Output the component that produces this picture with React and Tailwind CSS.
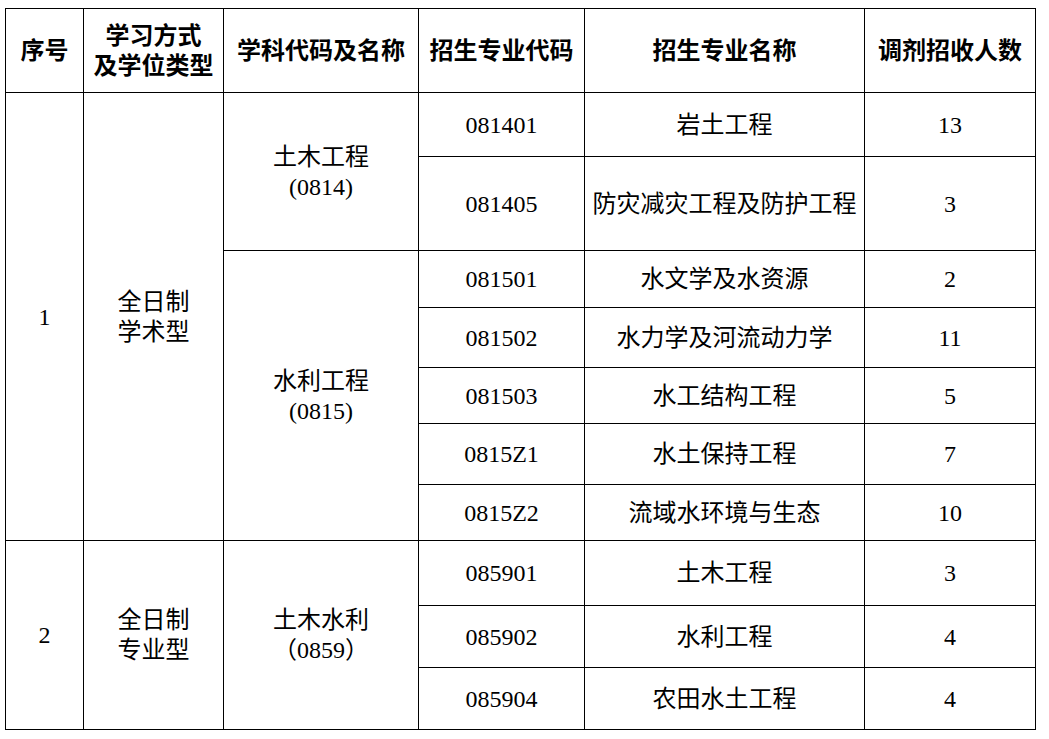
import React from 'react';

const font = { fontFamily: '"Liberation Serif", "Noto Sans CJK SC", serif' };

const rows = [
  { code: '081401', name: '岩土工程', num: '13', h: 'h-[64px]' },
  { code: '081405', name: '防灾减灾工程及防护工程', num: '3', h: 'h-[94px]' },
  { code: '081501', name: '水文学及水资源', num: '2', h: 'h-[57px]' },
  { code: '081502', name: '水力学及河流动力学', num: '11', h: 'h-[60px]' },
  { code: '081503', name: '水工结构工程', num: '5', h: 'h-[56px]' },
  { code: '0815Z1', name: '水土保持工程', num: '7', h: 'h-[61px]' },
  { code: '0815Z2', name: '流域水环境与生态', num: '10', h: 'h-[56px]' },
  { code: '085901', name: '土木工程', num: '3', h: 'h-[65px]' },
  { code: '085902', name: '水利工程', num: '4', h: 'h-[62px]' },
  { code: '085904', name: '农田水土工程', num: '4', h: 'h-[62px]' },
];

const cell = 'border border-black text-center align-middle p-0';

const App = () => {
  return (
    <div className="bg-white w-[1049px] h-[739px] pt-[8px] pl-[5px]" style={font}>
      <table className="table-fixed border-collapse text-black text-[24px] leading-[30px] w-[1030px]">
        <colgroup>
          <col className="w-[78px]" />
          <col className="w-[140px]" />
          <col className="w-[195px]" />
          <col className="w-[166px]" />
          <col className="w-[280px]" />
          <col className="w-[171px]" />
        </colgroup>
        <thead>
          <tr className="h-[84px] font-bold">
            <th className={cell}>序号</th>
            <th className={cell}>学习方式<br />及学位类型</th>
            <th className={cell}>学科代码及名称</th>
            <th className={cell}>招生专业代码</th>
            <th className={cell}>招生专业名称</th>
            <th className={cell}>调剂招收人数</th>
          </tr>
        </thead>
        <tbody>
          {rows.map((r, i) => (
            <tr key={r.code} className={r.h}>
              {i === 0 && <td rowSpan={7} className={cell}>1</td>}
              {i === 0 && <td rowSpan={7} className={cell}>全日制<br />学术型</td>}
              {i === 7 && <td rowSpan={3} className={cell}>2</td>}
              {i === 7 && <td rowSpan={3} className={cell}>全日制<br />专业型</td>}
              {i === 0 && <td rowSpan={2} className={cell}>土木工程<br />(0814)</td>}
              {i === 2 && <td rowSpan={5} className={cell}>水利工程<br />(0815)</td>}
              {i === 7 && <td rowSpan={3} className={cell}>土木水利<br />（0859）</td>}
              <td className={cell}>{r.code}</td>
              <td className={cell}>{r.name}</td>
              <td className={cell}>{r.num}</td>
            </tr>
          ))}
        </tbody>
      </table>
    </div>
  );
};

export default App;
